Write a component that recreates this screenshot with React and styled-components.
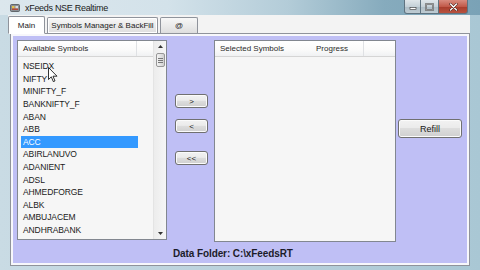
import React from 'react';
import styled, { createGlobalStyle } from 'styled-components';

const symbols = [
  'NSEIDX',
  'NIFTY',
  'MINIFTY_F',
  'BANKNIFTY_F',
  'ABAN',
  'ABB',
  'ACC',
  'ABIRLANUVO',
  'ADANIENT',
  'ADSL',
  'AHMEDFORGE',
  'ALBK',
  'AMBUJACEM',
  'ANDHRABANK',
];

const GlobalStyle = createGlobalStyle`
  html, body {
    margin: 0;
    padding: 0;
    overflow: hidden;
    background: #4d6a52;
  }
  * {
    box-sizing: border-box;
  }
`;

const Window = styled.div`
  width: 480px;
  height: 270px;
  display: flex;
  flex-direction: column;
  font-family: 'Liberation Sans', Arial, sans-serif;
  color: #111;
  background: linear-gradient(to right, #c9dbe4, #b7cfdb 60%, #a9c7d4);
  overflow: hidden;
`;

const TitleBar = styled.div`
  height: 15px;
  flex: 0 0 15px;
  display: flex;
  align-items: center;
  padding-left: 10px;
  background: linear-gradient(
    to right,
    #dce7ed 0%,
    #d3e2ea 35%,
    #b3ccd8 60%,
    #86abbd 80%,
    #7aa2b6 100%
  );
`;

const AppIcon = styled.svg`
  width: 10px;
  height: 10px;
  margin-right: 5px;
`;

const Title = styled.span`
  font-size: 9px;
  letter-spacing: -0.3px;
  color: #1a1a1a;
  flex: 1;
  margin-top: 1px;
`;

const Controls = styled.div`
  display: flex;
  align-self: flex-start;
  margin-right: 12px;
`;

const CtrlBtn = styled.div`
  width: ${(p) => p.w}px;
  height: 14px;
  display: flex;
  align-items: center;
  justify-content: center;
  border: 1px solid #5f7380;
  border-top: none;
  background: ${(p) =>
    p.close
      ? 'linear-gradient(#d88b7f, #c25a4a 50%, #a83c2c 51%, #b8523f)'
      : 'linear-gradient(#dfe6ea, #c5d1d8 50%, #aebdc6 51%, #bfccd3)'};
  border-radius: ${(p) => p.radius || '0'};
  & + & {
    border-left: none;
  }
`;

const Frame = styled.div`
  flex: 1;
  display: flex;
  flex-direction: column;
  padding: 0 10px 4px 10px;
`;

const TabStrip = styled.div`
  height: 18px;
  flex: 0 0 18px;
  display: flex;
  align-items: flex-end;
  background: #f3f3f3;
  margin: 0 0 0 -2px;
`;

const Tab = styled.div`
  height: ${(p) => (p.active ? 18 : 16)}px;
  width: ${(p) => p.w}px;
  display: flex;
  align-items: center;
  justify-content: center;
  font-size: 8px;
  color: #1a1a1a;
  border: 1px solid #8f939b;
  border-bottom: ${(p) => (p.active ? '1px solid #fff' : 'none')};
  border-radius: 2px 2px 0 0;
  background: ${(p) =>
    p.active ? '#ffffff' : 'linear-gradient(#f7f7f7, #ebebeb 50%, #dedede)'};
  margin-left: ${(p) => p.ml || 0}px;
  margin-bottom: ${(p) => (p.active ? -1 : 0)}px;
  position: relative;
  z-index: ${(p) => (p.active ? 2 : 1)};
  box-shadow: ${(p) => (p.focus ? 'inset 0 0 0 1px #fff' : 'none')};
`;

const Panel = styled.div`
  flex: 1;
  display: flex;
  flex-direction: column;
  border: 1px solid #8f939b;
  background: #bfbff5;
  box-shadow: inset 0 0 0 2px #f7f7fb;
  padding: 6px 6px 0 6px;
`;

const MainRow = styled.div`
  display: flex;
  align-items: flex-start;
`;

const ListBox = styled.div`
  width: ${(p) => p.w}px;
  height: ${(p) => p.h}px;
  display: flex;
  border: 1px solid #828790;
  background: #f6f6f6;
  position: relative;
  margin-left: ${(p) => p.ml || 0}px;
`;

const ListContent = styled.div`
  flex: 1;
  display: flex;
  flex-direction: column;
  min-width: 0;
`;

const Header = styled.div`
  height: 16px;
  display: flex;
  background: linear-gradient(#ffffff, #fafafa 60%, #f0f1f3);
  border-bottom: 1px solid #d5d5d5;
`;

const HeaderCell = styled.div`
  width: ${(p) => (p.w ? `${p.w}px` : 'auto')};
  flex: ${(p) => (p.w ? '0 0 auto' : 1)};
  display: flex;
  align-items: center;
  padding-left: ${(p) => p.pl ?? 5}px;
  font-size: 8px;
  color: #2a2a2a;
  border-right: ${(p) => (p.divider ? '1px solid #dfe1e4' : 'none')};
`;

const Rows = styled.div`
  padding-top: 3px;
  display: flex;
  flex-direction: column;
`;

const Row = styled.div`
  height: 12.6px;
  width: 117px;
  margin-left: 3px;
  display: flex;
  align-items: center;
  padding-left: 2px;
  font-size: 8.5px;
  letter-spacing: -0.1px;
  color: ${(p) => (p.selected ? '#fff' : '#1a1a1a')};
  background: ${(p) => (p.selected ? '#3399ff' : 'transparent')};
`;

const ScrollBar = styled.div`
  width: 13px;
  display: flex;
  flex-direction: column;
  align-items: center;
  background: linear-gradient(to right, #ececec, #f6f6f6);
  border-left: 1px solid #e4e4e4;
`;

const ScrollArrow = styled.div`
  height: 11px;
  width: 100%;
  display: flex;
  align-items: center;
  justify-content: center;
`;

const Thumb = styled.div`
  width: 9px;
  height: 14px;
  margin-top: 1px;
  border: 1px solid #979797;
  border-radius: 2px;
  background: linear-gradient(to right, #f3f3f3, #e2e2e2 50%, #d0d0d0);
  display: flex;
  flex-direction: column;
  align-items: center;
  justify-content: center;
  gap: 1px;
  span {
    width: 5px;
    height: 1px;
    background: #777;
  }
`;

const ScrollSpacer = styled.div`
  flex: 1;
`;

const Cursor = styled.svg`
  position: absolute;
  left: 30px;
  top: 26px;
  width: 10px;
  height: 16px;
`;

const ButtonColumn = styled.div`
  width: 33px;
  margin-left: 8px;
  display: flex;
  flex-direction: column;
`;

const Btn = styled.button`
  width: ${(p) => p.w || 33}px;
  height: ${(p) => p.h || 14}px;
  margin-top: ${(p) => p.mt || 0}px;
  padding: 0;
  border: 1px solid #707070;
  border-radius: 3px;
  background: linear-gradient(#f2f2f2, #ebebeb 45%, #dddddd 50%, #cfcfcf);
  box-shadow: inset 0 0 0 1px #fbfbfb;
  font-family: 'Liberation Sans', Arial, sans-serif;
  font-size: ${(p) => p.fs || 8}px;
  color: #1a1a1a;
  display: flex;
  align-items: center;
  justify-content: center;
`;

const SideColumn = styled.div`
  margin-left: 2px;
  display: flex;
  flex-direction: column;
`;

const Footer = styled.div`
  padding-left: 156px;
  margin-top: 6px;
  font-size: 10px;
  font-weight: bold;
  color: #1c1c2a;
  letter-spacing: -0.1px;
`;

const App = () => (
  <>
    <GlobalStyle />
    <Window>
      <TitleBar>
        <AppIcon viewBox="0 0 10 10">
          <rect x="0.5" y="1.5" width="9" height="7" rx="1" fill="#8a8f94" stroke="#4d5257" strokeWidth="0.8" />
          <rect x="2" y="3" width="2.5" height="2.5" fill="#e2c24a" />
          <rect x="5.5" y="3" width="2.5" height="2.5" fill="#d9dde0" />
          <rect x="2" y="5.5" width="6" height="1.5" fill="#b34a3a" />
        </AppIcon>
        <Title>xFeeds NSE Realtime</Title>
        <Controls>
          <CtrlBtn w={17} radius="0 0 0 3px">
            <svg width="8" height="6" viewBox="0 0 8 6">
              <rect x="1" y="3.5" width="6" height="2" fill="#fff" stroke="#333" strokeWidth="0.6" />
            </svg>
          </CtrlBtn>
          <CtrlBtn w={18}>
            <svg width="9" height="8" viewBox="0 0 9 8">
              <rect x="1" y="1" width="7" height="6" fill="none" stroke="#333" strokeWidth="1.4" />
              <rect x="1" y="1" width="7" height="6" fill="none" stroke="#fff" strokeWidth="0.5" />
            </svg>
          </CtrlBtn>
          <CtrlBtn w={29} close radius="0 0 3px 0">
            <svg width="9" height="8" viewBox="0 0 9 8">
              <path d="M1.5 1 L7.5 7 M7.5 1 L1.5 7" stroke="#3a1a16" strokeWidth="2.4" strokeLinecap="round" />
              <path d="M1.5 1 L7.5 7 M7.5 1 L1.5 7" stroke="#fff" strokeWidth="1.4" strokeLinecap="round" />
            </svg>
          </CtrlBtn>
        </Controls>
      </TitleBar>
      <Frame>
        <TabStrip>
          <Tab active w={37}>Main</Tab>
          <Tab w={111} ml={2} focus>Symbols Manager &amp; BackFill</Tab>
          <Tab w={38} ml={2}>@</Tab>
        </TabStrip>
        <Panel>
          <MainRow>
            <ListBox w={150} h={200}>
              <ListContent>
                <Header>
                  <HeaderCell w={119} divider>Available Symbols</HeaderCell>
                  <HeaderCell />
                </Header>
                <Rows>
                  {symbols.map((s) => (
                    <Row key={s} selected={s === 'ACC'}>
                      {s}
                    </Row>
                  ))}
                </Rows>
              </ListContent>
              <ScrollBar>
                <ScrollArrow>
                  <svg width="5" height="3" viewBox="0 0 5 3">
                    <path d="M0 3 L2.5 0 L5 3 Z" fill="#333" />
                  </svg>
                </ScrollArrow>
                <Thumb>
                  <span />
                  <span />
                  <span />
                </Thumb>
                <ScrollSpacer />
                <ScrollArrow>
                  <svg width="5" height="3" viewBox="0 0 5 3">
                    <path d="M0 0 L2.5 3 L5 0 Z" fill="#333" />
                  </svg>
                </ScrollArrow>
              </ScrollBar>
              <Cursor viewBox="0 0 10 16">
                <path
                  d="M0.5 0.5 L0.5 12.5 L3.3 9.8 L5.3 14.6 L7 13.9 L5 9.2 L9 9.2 Z"
                  fill="#fff"
                  stroke="#000"
                  strokeWidth="0.8"
                  strokeLinejoin="round"
                />
              </Cursor>
            </ListBox>
            <ButtonColumn>
              <Btn mt={54}>&gt;</Btn>
              <Btn mt={11}>&lt;</Btn>
              <Btn mt={18}>&lt;&lt;</Btn>
            </ButtonColumn>
            <ListBox w={182} h={202} ml={6}>
              <ListContent>
                <Header>
                  <HeaderCell w={96}>Selected Symbols</HeaderCell>
                  <HeaderCell w={53} divider>Progress</HeaderCell>
                  <HeaderCell />
                </Header>
              </ListContent>
            </ListBox>
            <SideColumn>
              <Btn w={64} h={19} mt={79} fs={9}>
                Refill
              </Btn>
            </SideColumn>
          </MainRow>
          <Footer>Data Folder: C:\xFeedsRT</Footer>
        </Panel>
      </Frame>
    </Window>
  </>
);

export default App;
